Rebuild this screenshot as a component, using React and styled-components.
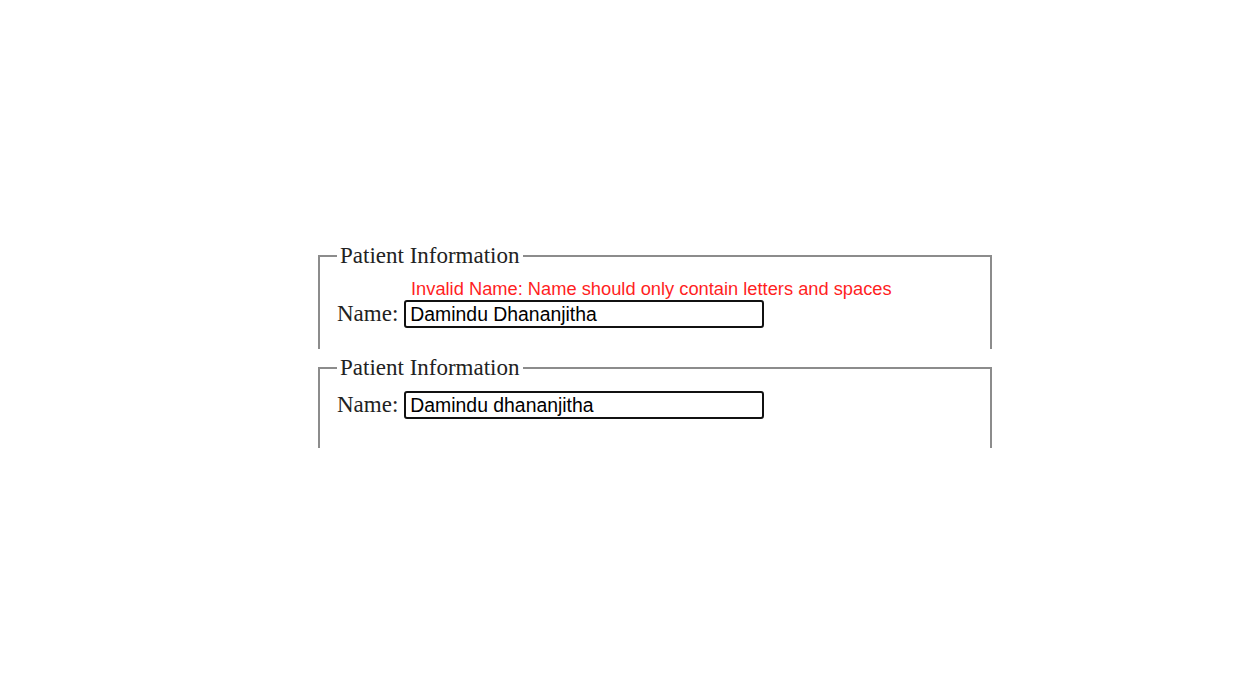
import React from 'react'
import styled, { createGlobalStyle } from 'styled-components'

const GlobalStyle = createGlobalStyle`
  html, body {
    margin: 0;
    padding: 0;
    background: #ffffff;
  }
  body {
    font-family: "Liberation Serif", "Times New Roman", serif;
    color: #222;
  }
`

const Page = styled.div`
  width: 1260px;
  height: 700px;
  padding: 243px 0 0 318px;
  box-sizing: border-box;
  display: flex;
  flex-direction: column;
  gap: 6px;
`

const Clip = styled.div`
  width: 674px;
  height: ${p => p.$height}px;
  overflow: hidden;
`

const Fieldset = styled.fieldset`
  margin: 0;
  padding: 10px 17px 14px;
  border: 2px solid #8c8c8c;
  border-radius: 0;
  min-height: 200px;
  font-size: 23px;
`

const Legend = styled.legend`
  padding: 0 3px;
  font-size: 23px;
  line-height: 26px;
  color: #222;
`

const ErrorText = styled.div`
  font-family: "Liberation Sans", Arial, sans-serif;
  font-size: 18.3px;
  line-height: 20px;
  color: #ff1f1f;
  padding-left: 74px;
  margin-bottom: 1px;
`

const Row = styled.div`
  display: flex;
  align-items: center;
  gap: 6px;
`

const Label = styled.label`
  font-size: 23px;
  line-height: 28px;
  color: #222;
`

const Input = styled.input`
  width: 360px;
  height: 28px;
  box-sizing: border-box;
  padding: 0 4px;
  border: 2px solid #111;
  border-radius: 3px;
  font-family: "Liberation Sans", Arial, sans-serif;
  font-size: 19.4px;
  color: #000;
  background: #fff;
  outline: none;
`

function PatientForm({ value, error, height }) {
  return (
    <Clip $height={height}>
      <Fieldset>
        <Legend>Patient Information</Legend>
        {error && <ErrorText>{error}</ErrorText>}
        <Row>
          <Label>Name:</Label>
          <Input type="text" defaultValue={value} />
        </Row>
      </Fieldset>
    </Clip>
  )
}

export default function App() {
  return (
    <>
      <GlobalStyle />
      <Page>
        <PatientForm
          value="Damindu Dhananjitha"
          error="Invalid Name: Name should only contain letters and spaces"
          height={106}
        />
        <PatientForm value="Damindu dhananjitha" height={93} />
      </Page>
    </>
  )
}
